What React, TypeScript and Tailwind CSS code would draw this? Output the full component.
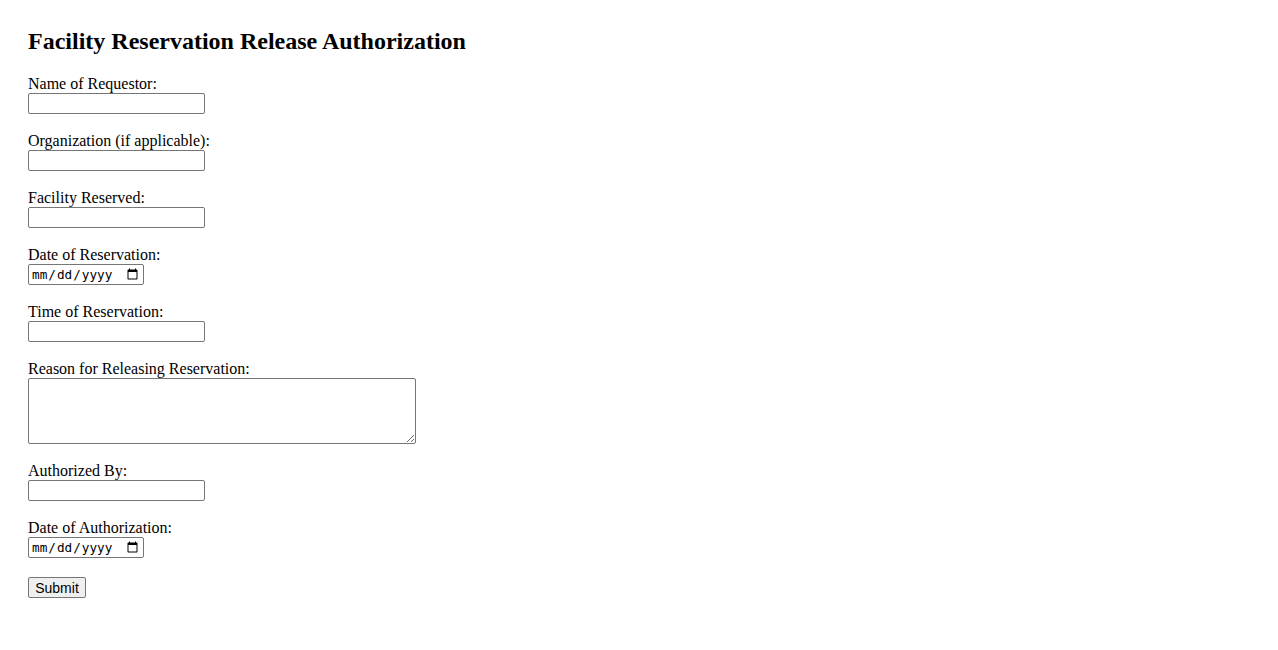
import { ReactNode } from 'react'

const inputClass =
  "block w-[177px] h-[21px] px-[2px] py-[1px] border border-[#767676] rounded-[2px] bg-white text-[13.33px] font-['Liberation_Sans',sans-serif]"

const dateClass =
  "block w-[116px] h-[21px] px-[2px] py-[1px] border border-[#767676] rounded-[2px] bg-white text-[12.7px] text-black font-['DejaVu_Sans_Mono',monospace]"

function Field({ label, children }: { label: string; children: ReactNode }) {
  return (
    <div className="flex flex-col mb-[17.6px]">
      <label className="block leading-[18.4px]">{label}</label>
      {children}
    </div>
  )
}

export default function App() {
  return (
    <div className="min-h-screen bg-white text-black font-['Liberation_Serif',serif] text-[16px] pl-[28px] pt-[28px]">
      <h2 className="text-[24px] font-bold leading-[27.6px] mb-[19px]">
        Facility Reservation Release Authorization
      </h2>

      <form onSubmit={(e) => e.preventDefault()}>
        <Field label="Name of Requestor:">
          <input type="text" className={inputClass} />
        </Field>

        <Field label="Organization (if applicable):">
          <input type="text" className={inputClass} />
        </Field>

        <Field label="Facility Reserved:">
          <input type="text" className={inputClass} />
        </Field>

        <Field label="Date of Reservation:">
          <input type="date" className={dateClass} />
        </Field>

        <Field label="Time of Reservation:">
          <input type="text" className={inputClass} />
        </Field>

        <Field label="Reason for Releasing Reservation:">
          <textarea className="block w-[388px] h-[66px] px-[2px] py-[2px] border border-[#767676] rounded-[2px] bg-white text-[13.33px] font-['DejaVu_Sans_Mono',monospace]" />
        </Field>

        <Field label="Authorized By:">
          <input type="text" className={inputClass} />
        </Field>

        <Field label="Date of Authorization:">
          <input type="date" className={dateClass} />
        </Field>

        <button
          type="submit"
          className="-mt-px h-[21px] w-[58px] border border-[#767676] rounded-[2px] bg-[#efefef] text-[14px] leading-none font-['Liberation_Sans',sans-serif] text-black"
        >
          Submit
        </button>
      </form>
    </div>
  )
}
